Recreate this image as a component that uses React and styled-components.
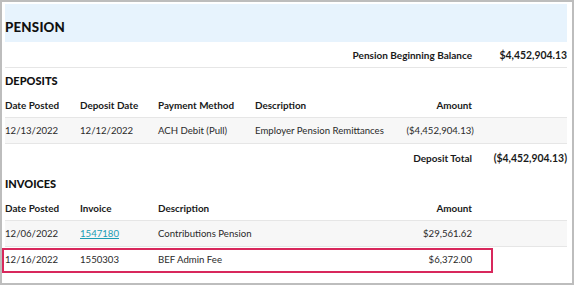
import styled, { createGlobalStyle } from "styled-components";

const GlobalStyle = createGlobalStyle`
  body {
    margin: 0;
    background: #fff;
    font-family: "Lato", "Liberation Sans", sans-serif;
    color: #222;
  }
`;

const deposits = [
  {
    posted: "12/13/2022",
    deposit: "12/12/2022",
    method: "ACH Debit (Pull)",
    desc: "Employer Pension Remittances",
    amount: "($4,452,904.13)",
  },
];

const invoices = [
  { posted: "12/06/2022", invoice: "1547180", desc: "Contributions Pension", amount: "$29,561.62", link: true },
  { posted: "12/16/2022", invoice: "1550303", desc: "BEF Admin Fee", amount: "$6,372.00", marked: true },
];

function App() {
  return (
    <Frame>
      <GlobalStyle />
      <Banner>PENSION</Banner>
      <Row $line>
        <Label>Pension Beginning Balance</Label>
        <Total>$4,452,904.13</Total>
      </Row>

      <SectionTitle>DEPOSITS</SectionTitle>
      <Row $head $line>
        <Cell>Date Posted</Cell>
        <Cell>Deposit Date</Cell>
        <Cell>Payment Method</Cell>
        <Cell>Description</Cell>
        <Money>Amount</Money>
      </Row>
      {deposits.map((d) => (
        <Row key={d.posted} $shade $line>
          <Cell>{d.posted}</Cell>
          <Cell>{d.deposit}</Cell>
          <Cell>{d.method}</Cell>
          <Cell>{d.desc}</Cell>
          <Money>{d.amount}</Money>
        </Row>
      ))}
      <Row $tall>
        <Label>Deposit Total</Label>
        <Total>($4,452,904.13)</Total>
      </Row>

      <SectionTitle>INVOICES</SectionTitle>
      <Row $head $line>
        <Cell>Date Posted</Cell>
        <Cell>Invoice</Cell>
        <Cell $span={2}>Description</Cell>
        <Money>Amount</Money>
      </Row>
      {invoices.map((inv, i) => (
        <Row key={inv.invoice} $shade={i % 2 === 0} $line={!inv.marked}>
          <Cell>{inv.posted}</Cell>
          <Cell>{inv.link ? <InvoiceLink href="#">{inv.invoice}</InvoiceLink> : inv.invoice}</Cell>
          <Cell $span={2}>{inv.desc}</Cell>
          <Money>{inv.amount}</Money>
          {inv.marked && <Highlight />}
        </Row>
      ))}
    </Frame>
  );
}

const Frame = styled.div`
  position: relative;
  box-sizing: border-box;
  width: 574px;
  height: 285px;
  border: 2px solid #bdbdbd;
  padding: 2px 5px 0 3px;
  font-size: 9.6px;
  overflow: hidden;
`;

const Banner = styled.div`
  height: 38px;
  background: #e7f3fd;
  display: flex;
  align-items: flex-end;
  padding-bottom: 7px;
  box-sizing: border-box;
  font-size: 13.3px;
  font-weight: 900;
  letter-spacing: 0.2px;
  color: #111;
`;

const Row = styled.div`
  position: relative;
  display: grid;
  grid-template-columns: 75px 78px 97px 1fr 90px 95px;
  align-items: center;
  height: ${(p) => (p.$tall ? "27px" : "25px")};
  background: ${(p) => (p.$shade ? "#f7f7f7" : "transparent")};
  border-bottom: ${(p) => (p.$line ? "1px solid #e6e6e6" : "none")};
  font-weight: ${(p) => (p.$head ? 700 : 400)};
  font-size: ${(p) => (p.$head ? "9.9px" : "inherit")};
  color: ${(p) => (p.$head ? "#1a1a1a" : "#2a2a2a")};
`;

const Cell = styled.div`
  grid-column: span ${(p) => p.$span || 1};
  white-space: nowrap;
`;

const Money = styled.div`
  text-align: right;
  white-space: nowrap;
`;

const Label = styled.div`
  grid-column: 1 / 6;
  text-align: right;
  font-weight: 700;
  font-size: 10px;
  color: #1a1a1a;
`;

const Total = styled.div`
  text-align: right;
  font-weight: 700;
  font-size: 10.4px;
  color: #1a1a1a;
`;

const SectionTitle = styled.div`
  height: 24px;
  display: flex;
  align-items: center;
  font-size: 11px;
  font-weight: 900;
  color: #111;
`;

const InvoiceLink = styled.a`
  color: #1a9db4;
  text-decoration: underline;
`;

const Highlight = styled.div`
  position: absolute;
  left: -3px;
  top: 1px;
  width: 491px;
  height: 25px;
  box-sizing: border-box;
  border: 2px solid #d8285c;
  pointer-events: none;
`;

export default App;
